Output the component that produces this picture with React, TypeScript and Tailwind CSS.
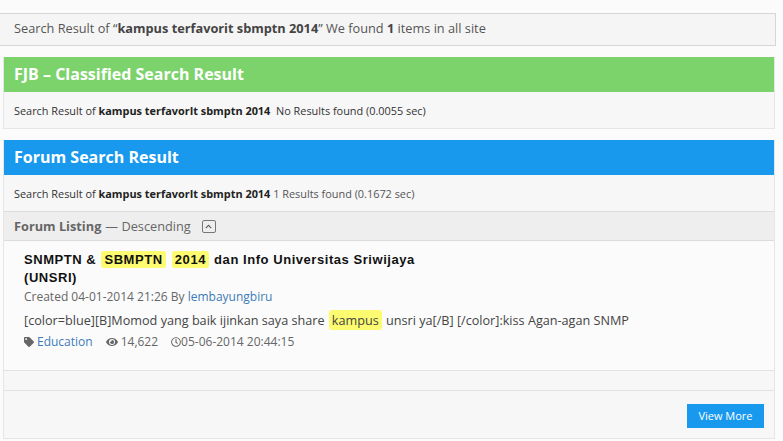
import { FaTag, FaEye, FaRegClock, FaChevronUp } from 'react-icons/fa';

const Mark = ({ children }: { children: React.ReactNode }) => (
  <span className="bg-[#fdfb6f] rounded-[3px] px-[3px] py-px mx-[1px]">{children}</span>
);

const App = () => {
  return (
    <div className="w-[783px] h-[441px] overflow-hidden bg-[#fbfbfb] pt-[13px] font-['Open_Sans',sans-serif] text-[#444]">
      {/* top summary */}
      <div className="w-[776px] h-[33px] border border-l-0 border-[#d6d6d6] bg-[#f5f5f5] pl-[14px] pb-[2px] flex items-center text-[12.75px] text-[#555]">
        <span>
          Search Result of “<b className="text-[#444]">kampus terfavorit sbmptn 2014</b>” We found <b className="text-[#444]">1</b> items in all site
        </span>
      </div>

      <div className="w-[772px] ml-[3px]">
        {/* FJB */}
        <section className="mt-[11px] border border-t-0 border-[#e6e6e6] bg-[#f7f7f7] h-[72px]">
          <h2 className="h-[35px] bg-[#7cd36c] text-white font-bold text-[16px] pl-[10px] pb-[2px] flex items-center">
            FJB – Classified Search Result
          </h2>
          <p className="h-[36px] pl-[10px] pt-[2px] flex items-center text-[10.9px] text-[#333] whitespace-pre">
            <span>
              Search Result of <b className="text-[#222]">kampus terfavorIt sbmptn 2014</b>{'  '}No Results found (0.0055 sec)
            </span>
          </p>
        </section>

        {/* Forum */}
        <section className="mt-[11px] border border-t-0 border-[#e6e6e6] bg-[#f7f7f7] h-[299px] flex flex-col">
          <h2 className="h-[35px] bg-[#1899ee] text-white font-bold text-[16px] pl-[10px] pb-[2px] flex items-center shrink-0">
            Forum Search Result
          </h2>
          <p className="h-[36px] pl-[10px] pt-[2px] flex items-center text-[10.9px] text-[#333] whitespace-pre shrink-0">
            <span>
              Search Result of <b className="text-[#222]">kampus terfavorIt sbmptn 2014</b> <span className="text-[#555]">1 Results found (0.1672 sec)</span>
            </span>
          </p>
          <div className="h-[30px] shrink-0 border-y border-[#dcdcdc] bg-[#eeeeee] pl-[10px] pt-[2px] flex items-center text-[12.75px] text-[#666]">
            <b>Forum Listing</b>
            <span className="ml-[4px]">— Descending</span>
            <span className="ml-[11px] mb-[2px] w-[14px] h-[13px] border border-[#777] rounded-[2px] flex items-center justify-center text-[#555]">
              <FaChevronUp className="w-[7px] h-[7px]" />
            </span>
          </div>

          <div className="h-[129px] shrink-0 bg-[#fbfbfb] pl-[20px] pt-[10px]">
            <h3 className="w-[410px] font-['Liberation_Sans',sans-serif] font-bold text-[13px] leading-[18px] tracking-[0.55px] text-[#111]">
              SNMPTN &amp; <Mark>SBMPTN</Mark> <Mark>2014</Mark> dan Info Universitas Sriwijaya (UNSRI)
            </h3>
            <div className="mt-[1px] text-[12px] leading-[17px] text-[#666]">
              Created 04-01-2014 21:26 By <span className="text-[#3b7cb8]">lembayungbiru</span>
            </div>
            <div className="mt-[6px] text-[12.65px] leading-[18px] text-[#444]">
              [color=blue][B]Momod yang baik ijinkan saya share <Mark>kampus</Mark> unsri ya[/B] [/color]:kiss Agan-agan SNMP
            </div>
            <div className="mt-[4px] flex items-center text-[12px] leading-[17px] text-[#666]">
              <FaTag className="w-[10px] h-[10px] mr-[3px] text-[#666]" />
              <span className="text-[#3b7cb8]">Education</span>
              <FaEye className="w-[12px] h-[12px] ml-[13px] mr-[3px] text-[#666]" />
              <span>14,622</span>
              <FaRegClock className="w-[10px] h-[10px] ml-[13px] text-[#666]" />
              <span>05-06-2014 20:44:15</span>
            </div>
          </div>

          <div className="h-[21px] shrink-0 border-y border-[#e2e2e2] bg-[#f7f7f7]" />

          <div className="flex-1 flex justify-end items-start pt-[13px] pr-[10px]">
            <button className="w-[77px] h-[24px] bg-[#1899ee] text-white text-[11px] flex items-center justify-center">
              View More
            </button>
          </div>
        </section>
      </div>
    </div>
  );
};

export default App;
